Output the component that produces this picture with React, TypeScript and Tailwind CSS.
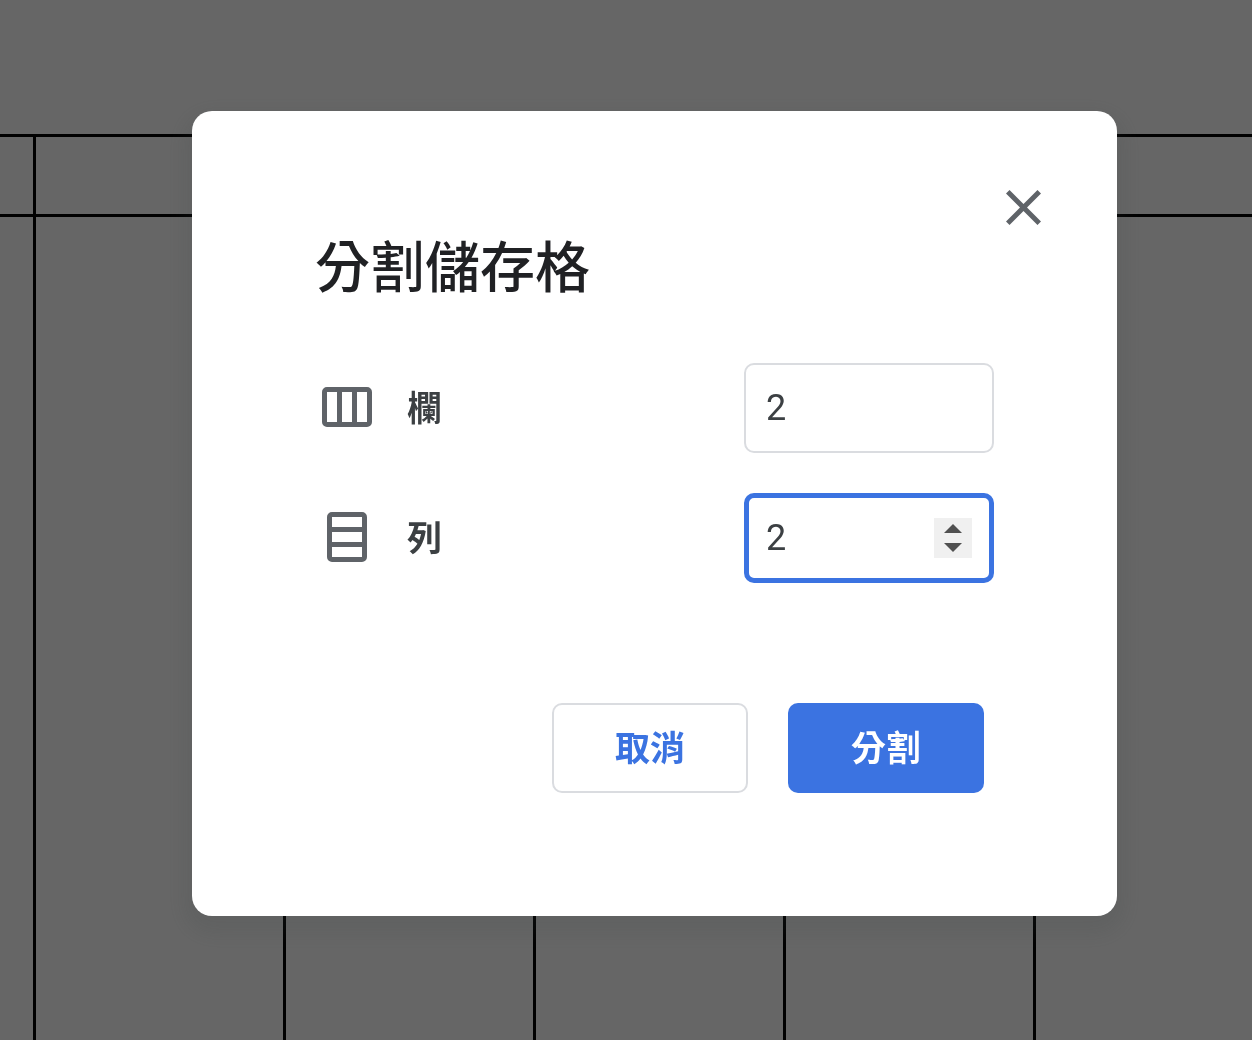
import React, { useState } from 'react';

interface NumberFieldProps {
  id: string;
  label: string;
  icon: React.ReactNode;
  value: number;
  active: boolean;
  onFocus: () => void;
  onChange: (value: number) => void;
}

const COLUMNS = ['A', 'B', 'C', 'D'];

const ColumnsIcon: React.FC = () => (
  <svg width="50" height="40" viewBox="0 0 50 40" fill="none" stroke="#5f6368" strokeWidth="5" aria-hidden="true">
    <rect x="2.5" y="2.5" width="45" height="35" rx="2.5" />
    <path d="M17.5 2.5v35M32.5 2.5v35" />
  </svg>
);

const RowsIcon: React.FC = () => (
  <svg width="40" height="50" viewBox="0 0 40 50" fill="none" stroke="#5f6368" strokeWidth="5" aria-hidden="true">
    <rect x="2.5" y="2.5" width="35" height="45" rx="2.5" />
    <path d="M2.5 17.5h35M2.5 32.5h35" />
  </svg>
);

const CloseIcon: React.FC = () => (
  <svg className="size-full" viewBox="5 5 14 14" fill="#5f6368" aria-hidden="true">
    <path d="M19 6.41 17.59 5 12 10.59 6.41 5 5 6.41 10.59 12 5 17.59 6.41 19 12 13.41 17.59 19 19 17.59 13.41 12z" />
  </svg>
);

const NumberField: React.FC<NumberFieldProps> = ({ id, label, icon, value, active, onFocus, onChange }) => (
  <div className="flex items-center">
    <span className="flex w-16 justify-center pb-0.5">{icon}</span>
    <label htmlFor={id} className="ml-7 flex-1 pt-1 text-[35px] leading-[50px] font-bold text-[#3c4043]">
      {label}
    </label>
    <div className="relative">
      <input
        id={id}
        type="number"
        min={1}
        value={value}
        onFocus={onFocus}
        onChange={(e) => onChange(Number(e.target.value))}
        className={`block h-[90px] w-[250px] rounded-[10px] bg-white text-[36px] text-[#3c4043] outline-none [appearance:textfield] [&::-webkit-inner-spin-button]:appearance-none ${
          active ? 'border-5 border-[#3b73e1] px-[17px]' : 'border-2 border-[#dadce0] px-5'
        }`}
      />
      {active && (
        <div className="absolute inset-y-0 right-[22px] my-auto flex h-10 w-[38px] flex-col bg-[#f0f0f0]">
          <button
            type="button"
            aria-label={`${label} +`}
            className="flex flex-1 items-end justify-center pb-[5px]"
            onClick={() => onChange(value + 1)}
          >
            <svg width="18" height="9" viewBox="0 0 18 9" fill="#505050"><path d="M9 0l9 9H0z" /></svg>
          </button>
          <button
            type="button"
            aria-label={`${label} −`}
            className="flex flex-1 items-start justify-center pt-[5px]"
            onClick={() => onChange(Math.max(1, value - 1))}
          >
            <svg width="18" height="9" viewBox="0 0 18 9" fill="#505050"><path d="M0 0h18L9 9z" /></svg>
          </button>
        </div>
      )}
    </div>
  </div>
);

// Ruled document table that sits behind the dialog
const Sheet: React.FC = () => (
  <div className="flex min-h-screen flex-col overflow-hidden bg-white pt-[134px]" aria-hidden="true">
    {['h-20', 'flex-1'].map((height) => (
      <div key={height} className={`flex border-t-3 border-black ${height}`}>
        <div className="w-9 shrink-0 border-r-3 border-black" />
        {COLUMNS.map((column) => (
          <div key={column} className="w-[250px] shrink-0 border-r-3 border-black" />
        ))}
      </div>
    ))}
  </div>
);

const App: React.FC = () => {
  const [columns, setColumns] = useState(2);
  const [rows, setRows] = useState(2);
  const [active, setActive] = useState<'columns' | 'rows'>('rows');

  return (
    <div className="font-[Roboto,'Noto_Sans_CJK_TC',sans-serif]">
      <Sheet />

      <div className="fixed inset-0 flex items-start justify-center overflow-auto bg-black/60 pt-[111px] pl-[57px]">
        <form
          role="dialog"
          aria-labelledby="split-title"
          onSubmit={(e) => e.preventDefault()}
          className="w-full max-w-[925px] rounded-[20px] bg-white pb-[123px] shadow-[0_10px_20px_8px_rgba(60,64,67,0.15)]"
        >
          <div className="flex justify-end px-[76px] pt-[79px]">
            <button type="button" aria-label="關閉" className="size-[35px]">
              <CloseIcon />
            </button>
          </div>

          <div className="px-[123px]">
            <h1 id="split-title" className="text-[55px] leading-[86px] font-medium text-[#202124]">分割儲存格</h1>

            <div className="mt-13 flex flex-col gap-10">
              <NumberField
                id="columns"
                label="欄"
                icon={<ColumnsIcon />}
                value={columns}
                active={active === 'columns'}
                onFocus={() => setActive('columns')}
                onChange={setColumns}
              />
              <NumberField
                id="rows"
                label="列"
                icon={<RowsIcon />}
                value={rows}
                active={active === 'rows'}
                onFocus={() => setActive('rows')}
                onChange={setRows}
              />
            </div>

            <div className="mt-[120px] flex justify-end gap-10 pr-2.5 text-[35px] font-bold">
              <button type="button" className="h-[90px] w-[196px] rounded-[10px] border-2 border-[#dadce0] bg-white pt-1 text-[#3b73e1]">
                取消
              </button>
              <button type="submit" className="h-[90px] w-[196px] rounded-[10px] bg-[#3b73e1] pt-1 text-white">
                分割
              </button>
            </div>
          </div>
        </form>
      </div>
    </div>
  );
};

export default App;
